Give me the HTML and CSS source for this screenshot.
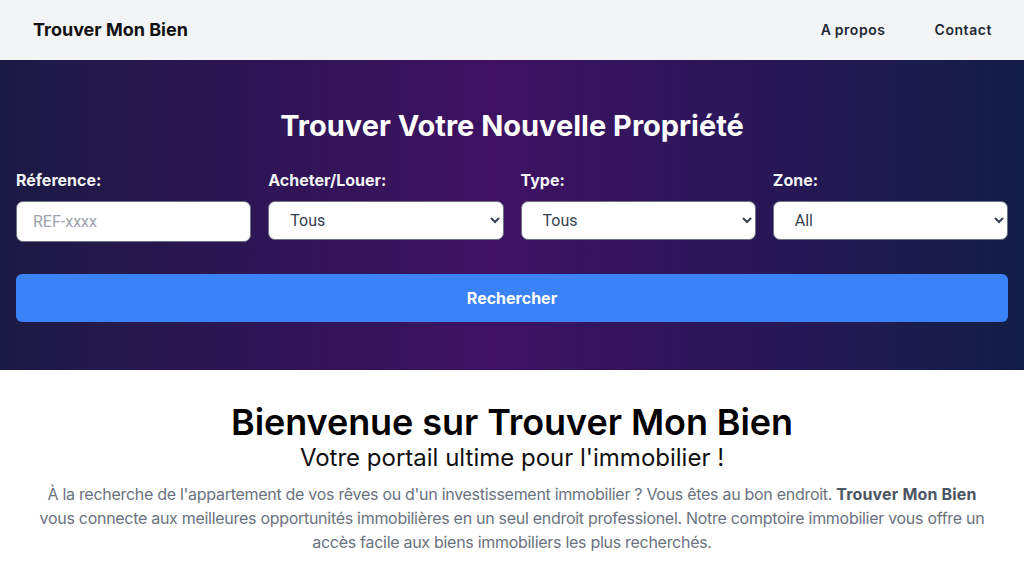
FILE: index.html
```html
<!DOCTYPE html>
<html lang="fr">
<head>
<meta charset="utf-8">
<title>Trouver Mon Bien</title>
<link rel="stylesheet" href="styles.css">
</head>
<body>
<header class="topbar">
  <div class="brand">Trouver Mon Bien</div>
  <nav class="nav">
    <a href="#" class="nav-link">A propos</a>
    <a href="#" class="nav-link">Contact</a>
  </nav>
</header>
<section class="hero">
  <h1 class="hero-title">Trouver Votre Nouvelle Propriété</h1>
  <form class="search">
    <div class="fields">
      <div class="field">
        <label class="label">Réference:</label>
        <input class="control" type="text" placeholder="REF-xxxx">
      </div>
      <div class="field">
        <label class="label">Acheter/Louer:</label>
        <select class="control select"><option>Tous</option></select>
      </div>
      <div class="field">
        <label class="label">Type:</label>
        <select class="control select"><option>Tous</option></select>
      </div>
      <div class="field">
        <label class="label">Zone:</label>
        <select class="control select"><option>All</option></select>
      </div>
    </div>
    <button type="button" class="submit">Rechercher</button>
  </form>
</section>
<section class="welcome">
  <h2 class="welcome-title">Bienvenue sur Trouver Mon Bien</h2>
  <p class="welcome-sub">Votre portail ultime pour l'immobilier !</p>
  <p class="welcome-text">À la recherche de l'appartement de vos rêves ou d'un investissement immobilier ? Vous êtes au bon endroit. <strong>Trouver Mon Bien</strong> vous connecte aux meilleures opportunités immobilières en un seul endroit professionel. Notre comptoire immobilier vous offre un accès facile aux biens immobiliers les plus recherchés.</p>
</section>
</body>
</html>
```
FILE: styles.css
```css
* { box-sizing: border-box; }
body {
  margin: 0;
  font-family: Inter, "Liberation Sans", sans-serif;
  background: #fff;
  color: #111827;
}
.topbar {
  height: 60px;
  background: #f3f4f6;
  display: flex;
  align-items: center;
  justify-content: space-between;
  padding: 0 32px 1px 33px;
}
.brand {
  font-size: 18px;
  font-weight: 700;
  color: #111;
}
.nav {
  display: flex;
  gap: 49px;
}
.nav-link {
  font-size: 14px;
  font-weight: 600;
  color: #1f2937;
  text-decoration: none;
  letter-spacing: 0.04em;
  word-spacing: -1px;
}
.hero {
  background: linear-gradient(90deg, #1b1a43 0%, #2e1555 25%, #3f1263 48%, #2c165a 70%, #121d45 100%);
  padding: 48px 16px 48px;
}
.hero-title {
  margin: 0 0 24px;
  text-align: center;
  color: #fff;
  font-size: 29px;
  line-height: 36px;
  font-weight: 700;
}
.fields {
  display: grid;
  grid-template-columns: repeat(4, 1fr);
  gap: 17px;
  align-items: start;
}
.field {
  display: flex;
  flex-direction: column;
  align-items: stretch;
}
.label {
  color: #f3f4f6;
  font-weight: 700;
  font-size: 16px;
  line-height: 24px;
  margin-bottom: 9px;
}
.control {
  height: 41px;
  border: 1px solid #6b7280;
  border-radius: 7px;
  background: #fff;
  font-family: Roboto, "Liberation Sans", Arial, sans-serif;
  font-size: 16px;
  color: #374151;
  padding: 0 16px;
  width: 100%;
}
.control::placeholder { color: #9ca3af; }
.select { height: 39px; padding: 0 4px 0 17px; }
.submit {
  margin-top: 32px;
  width: 100%;
  height: 48px;
  border: 0;
  border-radius: 6px;
  background: #3b82f6;
  color: #fff;
  font-family: Inter, sans-serif;
  font-size: 16px;
  font-weight: 700;
}
.welcome {
  padding: 32px 32px 16px;
  text-align: center;
}
.welcome-title {
  margin: 0;
  font-size: 36px;
  line-height: 40px;
  font-weight: 600;
  color: #000;
  letter-spacing: -0.002em;
}
.welcome-sub {
  margin: 0;
  font-size: 24px;
  line-height: 32px;
  color: #111;
}
.welcome-text {
  margin: 8px 0 0;
  font-size: 16px;
  line-height: 24px;
  color: #6b7280;
  letter-spacing: -0.018em;
}
.welcome-text strong { color: #4b5563; font-weight: 700; letter-spacing: 0.01em; }
```
